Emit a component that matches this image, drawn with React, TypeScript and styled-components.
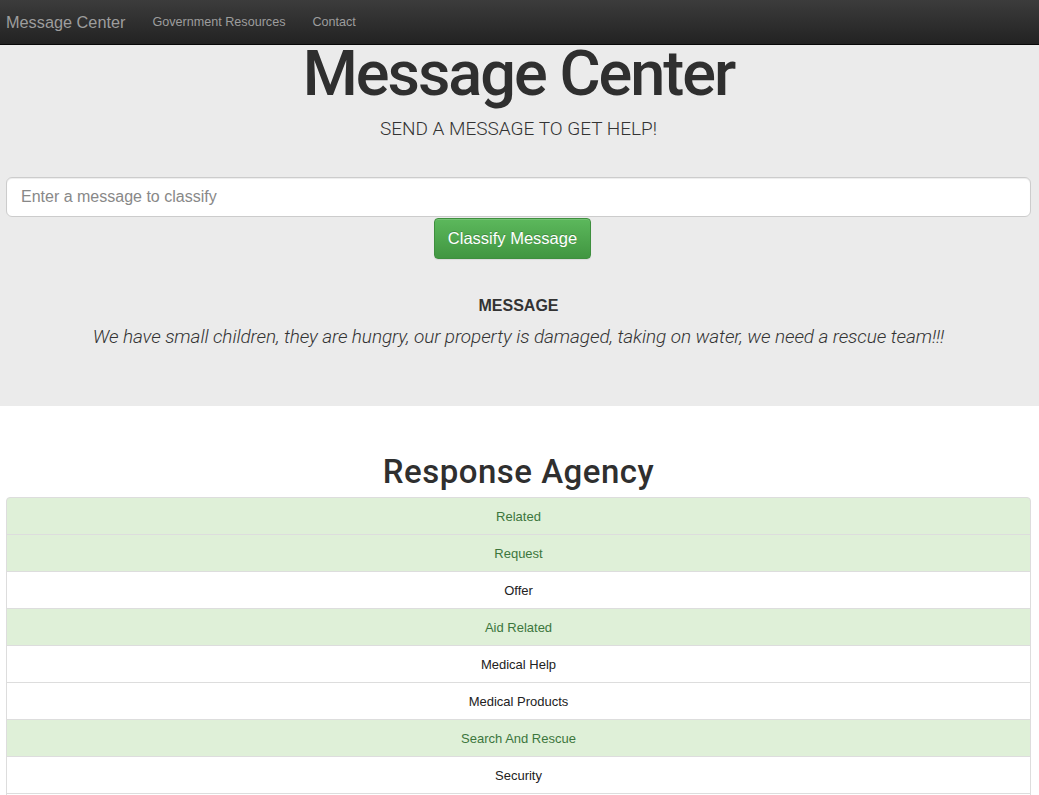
import React from "react";
import styled, { createGlobalStyle } from "styled-components";

const Global = createGlobalStyle`
  html, body { margin: 0; padding: 0; background: #fff; }
  body { font-family: "Liberation Sans", Arial, sans-serif; color: #333; font-size: 14px; }
  * { box-sizing: border-box; }
`;

const Navbar = styled.nav`
  height: 45px;
  background: linear-gradient(to bottom, #3c3c3c 0%, #222 100%);
  border-bottom: 1px solid #080808;
  display: flex;
  align-items: center;
  padding: 0 6px;
`;

const Brand = styled.a`
  font-size: 16.3px;
  color: #9d9d9d;
  margin-right: 27px;
  margin-top: 1px;
`;

const NavLink = styled.a`
  font-size: 12.6px;
  color: #9d9d9d;
  margin-right: 27px;
`;

const Jumbotron = styled.section`
  background: #ebebeb;
  padding: 0 8px 0 6px;
  height: 361px;
  display: flex;
  flex-direction: column;
  align-items: center;
`;

const Title = styled.h1`
  margin: 0;
  font-family: Roboto, "Liberation Sans", sans-serif;
  font-size: 63px;
  line-height: 57px;
  font-weight: 500;
  letter-spacing: -2px;
  color: #2f2f2f;
`;

const Subtitle = styled.p`
  margin: 15px 0 0;
  font-family: Roboto, "Liberation Sans", sans-serif;
  font-size: 19px;
  line-height: 24px;
  font-weight: 300;
  color: #333;
`;

const Input = styled.input`
  margin-top: 36px;
  width: 100%;
  height: 40px;
  border: 1px solid #ccc;
  border-radius: 6px;
  background: #fff;
  padding: 0 14px;
  font-family: "Liberation Sans", Arial, sans-serif;
  font-size: 16px;
  color: #555;
  box-shadow: inset 0 1px 1px rgba(0, 0, 0, 0.075);
  &::placeholder { color: #888; }
`;

const Button = styled.button`
  margin: 1px 12px 0 0;
  width: 157px;
  height: 41px;
  border: 1px solid #3e8f3e;
  border-radius: 4px;
  background: linear-gradient(to bottom, #5cb85c 0%, #419641 100%);
  color: #fff;
  font-family: "Liberation Sans", Arial, sans-serif;
  font-size: 16.5px;
  text-shadow: 0 -1px 0 rgba(0, 0, 0, 0.2);
  box-shadow: inset 0 1px 0 rgba(255, 255, 255, 0.15), 0 1px 1px rgba(0, 0, 0, 0.075);
`;

const MessageLabel = styled.h4`
  margin: 37px 0 0;
  font-size: 16px;
  line-height: 20px;
  font-weight: 700;
  color: #333;
`;

const MessageText = styled.p`
  margin: 9px 0 0;
  font-family: Roboto, "Liberation Sans", sans-serif;
  font-size: 19px;
  line-height: 24px;
  font-style: italic;
  font-weight: 300;
  letter-spacing: -0.1px;
  color: #333;
`;

const Section = styled.section`
  padding: 0 8px 0 6px;
  display: flex;
  flex-direction: column;
  align-items: center;
`;

const SectionTitle = styled.h2`
  margin: 47px 0 6px;
  font-family: Roboto, "Liberation Sans", sans-serif;
  font-size: 33px;
  line-height: 38px;
  font-weight: 500;
  letter-spacing: 0.5px;
  color: #2f2f2f;
`;

const List = styled.ul`
  margin: 0;
  padding: 0;
  width: 100%;
  list-style: none;
`;

const Item = styled.li<{ $active?: boolean }>`
  height: 38px;
  margin-bottom: -1px;
  border: 1px solid #ddd;
  background: ${(p) => (p.$active ? "#dff0d8" : "#fff")};
  color: ${(p) => (p.$active ? "#3c763d" : "#222")};
  font-size: 13px;
  display: flex;
  align-items: center;
  justify-content: center;
  &:first-child { border-radius: 4px 4px 0 0; }
`;

const items: [string, boolean][] = [
  ["Related", true],
  ["Request", true],
  ["Offer", false],
  ["Aid Related", true],
  ["Medical Help", false],
  ["Medical Products", false],
  ["Search And Rescue", true],
  ["Security", false],
  ["Military", false],
  ["Child Alone", false],
  ["Water", true],
];

export default function App() {
  return (
    <>
      <Global />
      <Navbar>
        <Brand>Message Center</Brand>
        <NavLink>Government Resources</NavLink>
        <NavLink>Contact</NavLink>
      </Navbar>
      <Jumbotron>
        <Title>Message Center</Title>
        <Subtitle>SEND A MESSAGE TO GET HELP!</Subtitle>
        <Input placeholder="Enter a message to classify" />
        <Button>Classify Message</Button>
        <MessageLabel>MESSAGE</MessageLabel>
        <MessageText>
          We have small children, they are hungry, our property is damaged, taking on water, we need a rescue team!!!
        </MessageText>
      </Jumbotron>
      <Section>
        <SectionTitle>Response Agency</SectionTitle>
        <List>
          {items.map(([label, active]) => (
            <Item key={label} $active={active}>
              {label}
            </Item>
          ))}
        </List>
      </Section>
    </>
  );
}
